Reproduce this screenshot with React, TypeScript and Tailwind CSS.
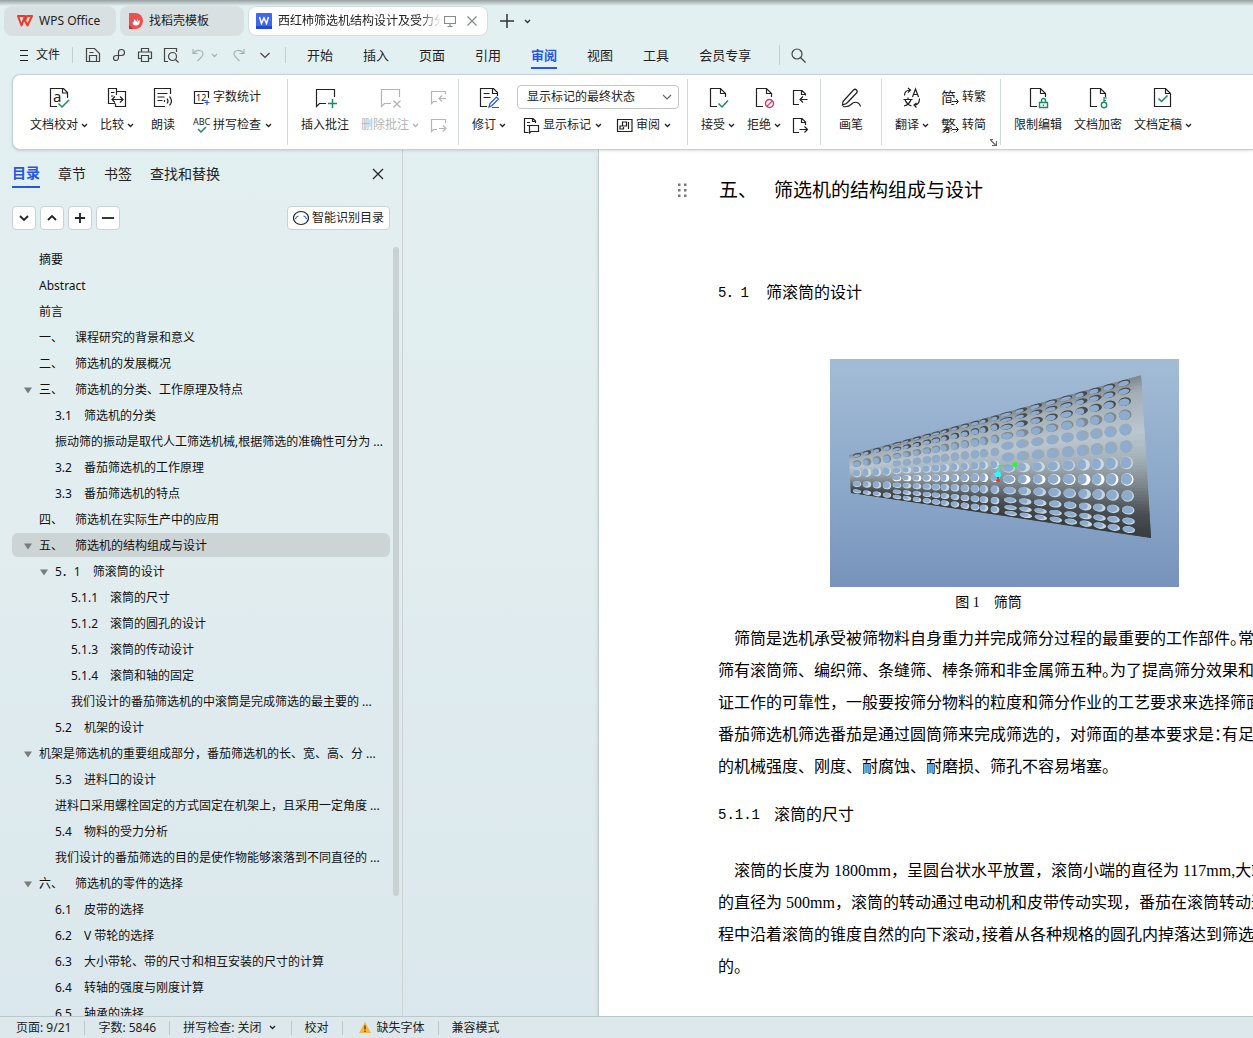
import { useState, type ReactNode } from "react";

type IconProps = { children: ReactNode; w?: number; className?: string };

function Icon({ children, w = 24, className = "" }: IconProps) {
  return (
    <svg
      width={w}
      height={w}
      viewBox={`0 0 ${w} ${w}`}
      fill="none"
      stroke="currentColor"
      strokeWidth="1.2"
      className={`shrink-0 ${className}`}
      aria-hidden="true"
    >
      {children}
    </svg>
  );
}

function Chevron({ className = "" }: { className?: string }) {
  return (
    <svg width="7" height="5" viewBox="0 0 7 5" fill="none" stroke="currentColor" strokeWidth="1.3" className={`shrink-0 ${className}`} aria-hidden="true">
      <path d="M1 1l2.5 2.5L6 1" />
    </svg>
  );
}

const GREEN = "#1a8a63";
const BLUE = "#2456e6";
const RED = "#d43a5e";

const proofIcon = (
  <Icon>
    <path d="M20.500 13V7.500l-4-4H3.500v18H10M15.500 3.500v4.500h5" />
    <text x="6" y="17" fontSize="15" stroke="none" fill="currentColor" fontFamily="Noto Sans">a</text>
    <path d="M11.500 18.500l3.500 3.500 7-7" stroke={GREEN} strokeWidth="1.500" />
  </Icon>
);
const compareIcon = (
  <Icon>
    <path d="M11.500 10V3.500h-8v15h6.500M11.500 6.500h9v15h-10v-3M6 7.500h3.500M6 11h2.500" />
    <path d="M7 14.500h11M10 11.500l-3 3 3 3M15 11.500l3 3-3 3" />
  </Icon>
);
const readIcon = (
  <Icon>
    <path d="M19.500 9V3.500H3.500v18H14M6.500 8.500h10M6.500 12h7M6.500 15.500h5" />
    <path d="M13.500 15v2M16 13.500q2 2.500 0 5M18.500 11.500q4 4.500 0 9" />
  </Icon>
);
const countIcon = (
  <Icon w={17}>
    <path d="M15.500 9V2.500H1.500v12h9" />
    <text x="3" y="12" fontSize="9" stroke="none" fill="currentColor" fontFamily="Noto Sans">12</text>
    <path d="M14 11v5M11.500 13.500h5" stroke={BLUE} />
  </Icon>
);
const spellIcon = (
  <Icon w={17}>
    <text x="0" y="8" fontSize="9" stroke="none" fill="currentColor" fontFamily="Noto Sans">ABC</text>
    <path d="M5 12l3 3 5-5" stroke={GREEN} strokeWidth="1.500" />
  </Icon>
);
const insertNoteIcon = (
  <Icon>
    <path d="M21.500 12V4.500h-18v17l3-3H13" />
    <path d="M19.500 14v9M15 18.500h9" stroke={GREEN} strokeWidth="1.500" />
  </Icon>
);
const deleteNoteIcon = (
  <Icon>
    <path d="M21.500 12V4.500h-18v17l3-3H13M15.500 15.500l7 7M22.500 15.500l-7 7" />
  </Icon>
);
const prevNoteIcon = (
  <Icon w={18}>
    <path d="M16.500 6V3.500H2.500v12l2-2H8M17 10.500h-7M13 7.500l-3 3 3 3" />
  </Icon>
);
const nextNoteIcon = (
  <Icon w={18}>
    <path d="M16.500 7V3.500H2.500v12l2-2H8M10 12.500h7M14 9.500l3 3-3 3" />
  </Icon>
);
const reviseIcon = (
  <Icon>
    <path d="M20.500 11V7.500l-4-4h-13v18H10M15.500 4v4.500h5M6.500 8.500h6M6.500 12.500h7" />
    <path d="M12 22l1-3.500 6.500-6.500 2 2-6.500 6.500zM15 22.500h7" stroke={BLUE} />
  </Icon>
);
const markupIcon = (
  <Icon w={17}>
    <path d="M12.500 6V4L10 1.500H1.500v14h4M9.500 1.500v3h3M4 5.500h3M4 8.500h2M6.500 16V8.500h9v6H8z" />
  </Icon>
);
const paneIcon = (
  <Icon w={17}>
    <path d="M1.500 2.500h14.500v12H1.500zM12.500 5v7M6.500 5h4v4h-4zM6.500 9h-2.500v3h3.500v-2" />
  </Icon>
);
const docPath = "M19.500 12V8.500l-5-5H4.500v18H11M14.500 3.500v5h5";
const acceptIcon = (
  <Icon>
    <path d={docPath} />
    <path d="M12.500 18.500l3.500 3.500 6-6.500" stroke={GREEN} strokeWidth="1.500" />
  </Icon>
);
const rejectIcon = (
  <Icon>
    <path d={docPath} />
    <circle cx="17.500" cy="18.500" r="4" stroke={RED} strokeWidth="1.500" />
    <path d="M14.800 21.300l5.500-5.500" stroke={RED} />
  </Icon>
);
const prevDocIcon = (
  <Icon w={17}>
    <path d="M13.500 6.500V5L10 1.500H1.500v14H7M9.500 1.500V5.500h4M15.500 10.500H8M11 7.500l-3 3 3 3" />
  </Icon>
);
const nextDocIcon = (
  <Icon w={17}>
    <path d="M13.500 8V5L10 1.500H1.500v14H7M9.500 1.500V5.500h4M7.500 12.500h8M12.500 9.500l3 3-3 3" />
  </Icon>
);
const penIcon = (
  <Icon>
    <path d="M4 16.500L14.500 5q1.500-1.500 3 0t0 3L7.500 18.500l-4 1.500zM9 17l8.500-9" />
    <path d="M4 21.500q5 1 8-2t6-2 3.500 4" />
  </Icon>
);
const translateIcon = (
  <Icon>
    <path d="M4.500 10.500q0-5.500 6-5.500M8 3l2.500 2L8 7.500M19.500 13.500q0 6.500-5.500 6.500M16.500 18L14 20l2.500 2.500" />
    <path d="M12.500 12l3-8 3 8M13.500 9.500h4M3.500 14.500h9M8 12.500v2M5 14.500q1.500 5 6.500 6.500M11 14.500q-1.500 5-7 6.500" />
  </Icon>
);
const lockIcon = (
  <Icon>
    <path d={docPath} />
    <path d="M13.500 17.500h8v5h-8zM15.500 17.500v-2q0-2 2-2t2 2v2M17.500 19.500v1.500" stroke={GREEN} strokeWidth="1.400" />
  </Icon>
);
const keyIcon = (
  <Icon>
    <path d={docPath} />
    <circle cx="18" cy="20" r="2.700" stroke={GREEN} strokeWidth="1.400" />
    <path d="M18 17.500V12M18 13h3M18 15.500h2" stroke={GREEN} />
  </Icon>
);
const finalIcon = (
  <Icon>
    <path d="M19.500 8.500l-5-5H3.500v18h16zM14.500 3.500v5h5" />
    <path d="M7.500 13.500l3 3 6-6" stroke={GREEN} strokeWidth="1.500" />
  </Icon>
);

function BigButton({ icon, label, arrow, disabled }: { icon: ReactNode; label: string; arrow?: boolean; disabled?: boolean }) {
  return (
    <button disabled={disabled} className="flex shrink-0 flex-col items-center gap-1 disabled:text-[#b4b4b4]">
      {icon}
      <span className="flex h-6 items-center gap-[3px] whitespace-nowrap">
        {label}
        {arrow && <Chevron />}
      </span>
    </button>
  );
}

function SmallButton({ icon, label, arrow, title, disabled }: { icon: ReactNode; label?: string; arrow?: boolean; title?: string; disabled?: boolean }) {
  return (
    <button disabled={disabled} aria-label={title} className="flex h-6 shrink-0 items-center gap-[3px] whitespace-nowrap disabled:text-[#b4b4b4]">
      {icon}
      {label}
      {arrow && <Chevron className="ml-px" />}
    </button>
  );
}

function Divider() {
  return <div className="h-[66px] w-px shrink-0 self-center bg-[#d3d8d8]" />;
}

function CjkGlyph({ char }: { char: string }) {
  return (
    <span className="relative flex w-[18px] text-[15px]">
      {char}
      <svg width="7" height="6" viewBox="0 0 7 6" fill="none" stroke="currentColor" className="absolute right-0 bottom-[3px] bg-white" aria-hidden="true">
        <path d="M0 3.500h6M4 1l2.500 2.500L4 6" />
      </svg>
    </span>
  );
}

function TitleBar() {
  return (
    <header className="flex gap-1 pt-1.5 pl-1 text-xs">
      <button className="flex h-[30px] w-28 items-center gap-[6px] rounded-lg bg-[#d8e0e2] pl-[13px]">
        <svg width="16" height="12" viewBox="0 0 16 12" fill="none" stroke="#ee3b2c" strokeWidth="2" strokeLinejoin="round" aria-hidden="true">
          <path d="M1 1h7L4.500 10.500zM7 4l3.500 6.500L15 1h-5L7.500 7" />
        </svg>
        WPS Office
      </button>
      <button className="flex h-[30px] w-[124px] items-center gap-[5px] rounded-lg bg-[#d8e0e2] pl-2">
        <svg width="16" height="16" viewBox="0 0 16 16" aria-hidden="true">
          <path d="M1 0h6.500a7.500 8 0 0 1 0 16H1z" fill="#ee4f50" />
          <path d="M1 12v4h4z" fill="#b92f35" />
          <path d="M8.500 3q2 2.500-.5 6 0-2-2-3 0 4-1.500 3.500Q5 13 8.500 12.500 12 12 12 7q-1.500 0-3 3 1.500-4-.5-7z" fill="#fff" />
        </svg>
        找稻壳模板
      </button>
      <div className="flex h-[30px] w-60 items-center rounded-lg border border-[#d5dddd] bg-white pl-[7px]">
        <svg width="16" height="16" viewBox="0 0 16 16" className="shrink-0" aria-hidden="true">
          <rect width="16" height="16" rx="1" fill="#3f68f0" />
          <path d="M0 13h16v3H0z" fill="#2348cf" />
          <path d="M3.500 4l2 6.500L8 5l2.500 5.500 2-6.500" fill="none" stroke="#fff" strokeWidth="1.500" />
        </svg>
        <span className="ml-1.5 w-[164px] overflow-hidden whitespace-nowrap [mask-image:linear-gradient(to_right,#000_86%,transparent)]">
          西红柿筛选机结构设计及受力分
        </span>
        <Icon w={12} className="ml-[2px] text-[#858a8a]">
          <path d="M.5 1.500h11v7H.5zM6 8.500v3M3.500 11.500h5" />
        </Icon>
        <button aria-label="关闭标签" className="ml-2.5 text-[#858a8a]">
          <Icon w={12}>
            <path d="M1.500 1.500l9 9M10.500 1.500l-9 9" />
          </Icon>
        </button>
      </div>
      <button aria-label="新建标签" className="ml-2 text-[#333]">
        <Icon w={14}>
          <path d="M7 0v14M0 7h14" strokeWidth="1.500" />
        </Icon>
      </button>
      <button aria-label="标签列表" className="ml-1.5 text-[#333]">
        <Chevron />
      </button>
    </header>
  );
}

const menuTabs = ["开始", "插入", "页面", "引用", "审阅", "视图", "工具", "会员专享"];

function MenuBar() {
  const [active, setActive] = useState("审阅");
  return (
    <nav className="flex h-[38px] shrink-0 items-center">
      <button className="ml-5 flex items-center gap-2 text-xs">
        <Icon w={8} className="overflow-visible">
          <path d="M0 -.5h8M0 4.500h8M0 9.500h8" strokeWidth="1" />
        </Icon>
        文件
      </button>
      <div className="ml-3 h-4 w-px bg-[#c6cfd0]" />
      <div className="ml-3 flex items-center gap-2.5 text-[#444]">
        <button aria-label="保存">
          <Icon w={16}>
            <path d="M1.500 1.500h8l5 5v8h-13zM4.500 14V8.500h7V14M4.500 5.500h4" />
          </Icon>
        </button>
        <button aria-label="输出">
          <Icon w={16}>
            <path d="M7.500 10V5q0-2.500 3-2.500T13.500 5.500t-3 3H5.500Q2.500 8.500 2.500 11T5 13.500 7.500 10" />
          </Icon>
        </button>
        <button aria-label="打印">
          <Icon w={16}>
            <path d="M4.500 5V1.500h7V5M4.500 11.500h-3V5h13v6.500h-3M4.500 8.500h7v6h-7z" />
          </Icon>
        </button>
        <button aria-label="打印预览">
          <Icon w={16}>
            <path d="M5 14.500H1.500v-13h12V5M12.500 12.500l3 3" />
            <circle cx="9.500" cy="9.500" r="4" />
          </Icon>
        </button>
        <button aria-label="撤销" className="ml-0.5 flex items-center gap-1.5 text-[#a9b2b3]">
          <Icon w={14}>
            <path d="M2 1v4.500h4.500M2 5.500Q5 2 8.500 2.500T12 6q0 2-5.500 7" />
          </Icon>
          <Chevron />
        </button>
        <button aria-label="恢复" className="ml-1 text-[#a9b2b3]">
          <Icon w={14}>
            <path d="M12 1v4.500H7.500M12 5.500Q9 2 5.500 2.500T2 6q0 2 5.500 7" />
          </Icon>
        </button>
        <button aria-label="更多" className="ml-[3px]">
          <Icon w={12}>
            <path d="M1.500 4L6 8.500 10.500 4" />
          </Icon>
        </button>
      </div>
      <div className="ml-3.5 h-4 w-px bg-[#c6cfd0]" />
      <div className="ml-[21px] flex gap-[30px] text-[13px]">
        {menuTabs.map((tab) => (
          <button
            key={tab}
            onClick={() => setActive(tab)}
            className={`flex h-7 items-center border-b-2 pt-1 whitespace-nowrap ${active === tab ? "border-[#2456e6] font-bold text-[#2456e6]" : "border-transparent"}`}
          >
            {tab}
          </button>
        ))}
      </div>
      <div className="ml-7 h-5 w-px bg-[#c6cfd0]" />
      <button aria-label="搜索" className="ml-2.5 text-[#444]">
        <Icon w={17}>
          <circle cx="7" cy="7" r="5" />
          <path d="M10.500 10.500l5 5" />
        </Icon>
      </button>
    </nav>
  );
}

function Ribbon() {
  return (
    <div className="relative z-10 ml-3 flex h-[76px] shrink-0 overflow-hidden rounded-l-lg border border-r-0 border-[#c5d1d2] bg-white text-xs shadow-sm">
      <div className="flex w-[274px] shrink-0 pt-[10px] pl-[17px]">
        <BigButton icon={proofIcon} label="文档校对" arrow />
        <div className="ml-3">
          <BigButton icon={compareIcon} label="比较" arrow />
        </div>
        <div className="ml-[17px]">
          <BigButton icon={readIcon} label="朗读" />
        </div>
        <div className="ml-[18px] flex flex-col gap-1">
          <SmallButton icon={countIcon} label="字数统计" />
          <SmallButton icon={spellIcon} label="拼写检查" arrow />
        </div>
      </div>
      <Divider />
      <div className="flex w-[170px] shrink-0 pt-[10px] pl-[13px]">
        <BigButton icon={insertNoteIcon} label="插入批注" />
        <div className="ml-3">
          <BigButton icon={deleteNoteIcon} label="删除批注" arrow disabled />
        </div>
        <div className="ml-[10px] flex flex-col gap-1">
          <SmallButton icon={prevNoteIcon} title="上一条批注" disabled />
          <SmallButton icon={nextNoteIcon} title="下一条批注" disabled />
        </div>
      </div>
      <Divider />
      <div className="flex w-[228px] shrink-0 pt-[10px] pl-[13px]">
        <BigButton icon={reviseIcon} label="修订" arrow />
        <div className="ml-[11px] flex flex-col gap-1">
          <div className="relative">
            <select aria-label="标记显示方式" className="block h-6 w-[162px] appearance-none rounded border border-[#c3c7c7] bg-white pl-[9px]">
              <option>显示标记的最终状态</option>
              <option>最终状态</option>
              <option>显示标记的原始状态</option>
              <option>原始状态</option>
            </select>
            <Icon w={10} className="pointer-events-none absolute top-[7px] right-[7px] text-[#666]">
              <path d="M1 3l4 4 4-4" />
            </Icon>
          </div>
          <div className="flex gap-[14px] pl-1.5">
            <SmallButton icon={markupIcon} label="显示标记" arrow />
            <SmallButton icon={paneIcon} label="审阅" arrow />
          </div>
        </div>
      </div>
      <Divider />
      <div className="flex w-[132px] shrink-0 pt-[10px] pl-[13px]">
        <BigButton icon={acceptIcon} label="接受" arrow />
        <div className="ml-3">
          <BigButton icon={rejectIcon} label="拒绝" arrow />
        </div>
        <div className="ml-[11px] flex flex-col gap-1">
          <SmallButton icon={prevDocIcon} title="上一条修订" />
          <SmallButton icon={nextDocIcon} title="下一条修订" />
        </div>
      </div>
      <Divider />
      <div className="flex w-[60px] shrink-0 justify-center pt-[10px]">
        <BigButton icon={penIcon} label="画笔" />
      </div>
      <Divider />
      <div className="relative flex w-[118px] shrink-0 pt-[10px] pl-[13px]">
        <BigButton icon={translateIcon} label="翻译" arrow />
        <div className="ml-3 flex flex-col gap-1">
          <SmallButton icon={<CjkGlyph char="简" />} label="转繁" />
          <SmallButton icon={<CjkGlyph char="繁" />} label="转简" />
        </div>
        <button aria-label="更多翻译设置" className="absolute right-[3px] bottom-[3px] text-[#666]">
          <Icon w={7}>
            <path d="M0 .500h3M.5 1l5 5M6.500 2v4.500H2" />
          </Icon>
        </button>
      </div>
      <Divider />
      <div className="flex gap-3 pt-[10px] pl-[13px]">
        <BigButton icon={lockIcon} label="限制编辑" />
        <BigButton icon={keyIcon} label="文档加密" />
        <BigButton icon={finalIcon} label="文档定稿" arrow />
      </div>
    </div>
  );
}

type TocItem = { text: string; level: 1 | 2 | 3; open?: boolean; active?: boolean };

const toc: TocItem[] = [
  { text: "摘要", level: 1 },
  { text: "Abstract", level: 1 },
  { text: "前言", level: 1 },
  { text: "一、　课程研究的背景和意义", level: 1 },
  { text: "二、　筛选机的发展概况", level: 1 },
  { text: "三、　筛选机的分类、工作原理及特点", level: 1, open: true },
  { text: "3.1　筛选机的分类", level: 2 },
  { text: "振动筛的振动是取代人工筛选机械,根据筛选的准确性可分为 ...", level: 2 },
  { text: "3.2　番茄筛选机的工作原理", level: 2 },
  { text: "3.3　番茄筛选机的特点", level: 2 },
  { text: "四、　筛选机在实际生产中的应用", level: 1 },
  { text: "五、　筛选机的结构组成与设计", level: 1, open: true, active: true },
  { text: "5．1　筛滚筒的设计", level: 2, open: true },
  { text: "5.1.1　滚筒的尺寸", level: 3 },
  { text: "5.1.2　滚筒的圆孔的设计", level: 3 },
  { text: "5.1.3　滚筒的传动设计", level: 3 },
  { text: "5.1.4　滚筒和轴的固定", level: 3 },
  { text: "我们设计的番茄筛选机的中滚筒是完成筛选的最主要的 ...", level: 3 },
  { text: "5.2　机架的设计", level: 2 },
  { text: "机架是筛选机的重要组成部分，番茄筛选机的长、宽、高、分 ...", level: 1, open: true },
  { text: "5.3　进料口的设计", level: 2 },
  { text: "进料口采用螺栓固定的方式固定在机架上，且采用一定角度 ...", level: 2 },
  { text: "5.4　物料的受力分析", level: 2 },
  { text: "我们设计的番茄筛选的目的是使作物能够滚落到不同直径的 ...", level: 2 },
  { text: "六、　筛选机的零件的选择", level: 1, open: true },
  { text: "6.1　皮带的选择", level: 2 },
  { text: "6.2　V 带轮的选择", level: 2 },
  { text: "6.3　大小带轮、带的尺寸和相互安装的尺寸的计算", level: 2 },
  { text: "6.4　转轴的强度与刚度计算", level: 2 },
  { text: "6.5　轴承的选择", level: 2 },
];

const indent = { 1: "pl-[11px]", 2: "pl-[27px]", 3: "pl-[43px]" };

const toolButton = "flex size-6 items-center justify-center rounded border border-[#c9d3d4] bg-white text-[#222]";

function Sidebar() {
  return (
    <aside className="flex w-[403px] shrink-0 flex-col border-r border-[#cdd3d4]">
      <div className="flex items-start gap-[18px] pt-2.5 pr-[18px] pl-3 text-sm">
        <button className="flex h-7 items-center border-b-2 border-[#2456e6] font-bold text-[#2456e6]">目录</button>
        <button className="h-7">章节</button>
        <button className="h-7">书签</button>
        <button className="h-7">查找和替换</button>
        <button aria-label="关闭目录" className="ml-auto flex h-7 items-center">
          <Icon w={12}>
            <path d="M1 1l10 10M11 1L1 11" />
          </Icon>
        </button>
      </div>
      <div className="mt-[18px] flex gap-1 pr-3 pl-3 text-xs">
        <button aria-label="展开" className={toolButton}>
          <Icon w={10}>
            <path d="M1 3l4 4 4-4" strokeWidth="1.800" />
          </Icon>
        </button>
        <button aria-label="收起" className={toolButton}>
          <Icon w={10}>
            <path d="M1 7l4-4 4 4" strokeWidth="1.800" />
          </Icon>
        </button>
        <button aria-label="升级" className={toolButton}>
          <Icon w={10}>
            <path d="M5 0v10M0 5h10" strokeWidth="1.800" />
          </Icon>
        </button>
        <button aria-label="降级" className={toolButton}>
          <Icon w={12}>
            <path d="M0 6h12" strokeWidth="1.800" />
          </Icon>
        </button>
        <button className="ml-auto flex h-6 items-center gap-[3px] rounded border border-[#c9d3d4] bg-white px-[5px]">
          <Icon w={16}>
            <ellipse cx="8" cy="8" rx="7.500" ry="6.500" />
            <path d="M2.500 9q.5-2.500 3-3M13.500 9q-.5-2.500-3-3" stroke={BLUE} />
          </Icon>
          智能识别目录
        </button>
      </div>
      <div className="mt-[17px] flex min-h-0 flex-1 overflow-hidden pl-3 text-xs">
        <ul className="flex min-w-0 flex-1 flex-col gap-[2px] text-[#111]">
          {toc.map((item) => (
            <li key={item.text} className="shrink-0">
              <a
                href="#"
                className={`flex h-6 items-center rounded-md pt-0.5 whitespace-nowrap [text-spacing-trim:space-all] ${indent[item.level]} ${item.active ? "bg-[#ccd4d6]" : ""}`}
              >
                <span className="w-4 shrink-0">
                  {item.open && (
                    <svg width="10" height="7" viewBox="0 0 10 7" aria-hidden="true">
                      <path d="M1 .5h8L5 6.500z" fill="#777d7d" />
                    </svg>
                  )}
                </span>
                {item.text}
              </a>
            </li>
          ))}
        </ul>
        <div className="mr-[3px] ml-[3px] h-[649px] w-1.5 shrink-0 rounded-full bg-[#c8d1d3]" />
      </div>
    </aside>
  );
}

// Conical drum. Every point is given by an x and by a share of the height at that x.
const topAt = (x: number) => 96 - (x - 19) * 0.274;
const bottomAt = (x: number) => 134 + (x - 21) * 0.15;
const at = (x: number, f: number) => topAt(x) + (bottomAt(x) - topAt(x)) * f;

const shades: [number, number[]][] = [
  [0, [125, 135, 141]],
  [0.1, [163, 174, 181]],
  [0.35, [186, 199, 208]],
  [0.5, [168, 180, 188]],
  [0.68, [125, 135, 141]],
  [0.86, [72, 78, 82]],
  [1, [56, 61, 64]],
];

function shadeAt(f: number) {
  const i = Math.max(1, shades.findIndex(([stop]) => stop >= f));
  const [a, from] = shades[i - 1];
  const [b, to] = shades[i];
  const t = (f - a) / (b - a);
  return `rgb(${from.map((c, k) => Math.round(c + (to[k] - c) * t)).join(",")})`;
}

const slices = Array.from({ length: 50 }, (_, i) => {
  const f = i / 50;
  const g = f + 0.04;
  return {
    color: shadeAt(f + 0.01),
    points: `18,${at(18, f)} 323,${at(323, f)} 323,${at(323, g)} 18,${at(18, g)}`,
  };
});

const sections = [
  { cols: [27, 37, 47, 57], rx: 4.2, rows: [0.06, 0.26, 0.5, 0.76, 0.94] },
  { cols: [67, 77, 87, 97, 106, 115, 125, 135, 145, 154, 165], rx: 4.3, rows: [0.03, 0.12, 0.24, 0.37, 0.5, 0.63, 0.75, 0.86, 0.95] },
  { cols: [178, 193, 208, 223, 238, 253, 267, 281, 296], rx: 6.3, rows: [0.025, 0.077, 0.145, 0.23, 0.325, 0.434, 0.54, 0.647, 0.753, 0.845, 0.915, 0.97] },
];

function innerColor(f: number) {
  if (f < 0.2) return "#454c50";
  if (f < 0.3) return "#7d878d";
  if (f < 0.48) return "#9ba9b2";
  if (f < 0.58) return "#c9dae4";
  if (f < 0.7) return "#ffffff";
  return "#c5d6e1";
}

const holes = sections.flatMap(({ cols, rx, rows }, s) =>
  cols.flatMap((x, c) =>
    rows.map((f, r) => {
      // room between this row and its neighbours keeps the holes apart
      const gap = Math.min(f - (rows[r - 1] ?? -f), (rows[r + 1] ?? 2 - f) - f);
      const room = (bottomAt(x) - topAt(x)) * gap * 0.4;
      return {
        x: x + (s === 2 ? f * 5 - 2 : 0),
        y: at(x, f),
        rx,
        ry: Math.max(0.9, Math.min(room, rx)),
        tilt: -16 + f * 26,
        shift: (1 + ((c * 7) % 4) * 0.6) * (s === 2 ? 1 : 0.7),
        up: f < 0.5 ? 0.8 : -0.6,
        inner: innerColor(f),
      };
    })
  )
);

function DrumFigure() {
  return (
    <svg width="349" height="228" viewBox="0 0 349 228" role="img" aria-label="筛筒">
      <defs>
        <linearGradient id="sky" x1="0" y1="0" x2="0" y2="1">
          <stop offset="0" stopColor="#a3bcd6" />
          <stop offset="0.5" stopColor="#8eaacb" />
          <stop offset="1" stopColor="#7793bb" />
        </linearGradient>
        <clipPath id="drum">
          <path d="M19 96L311 16l10 163L21 134z" />
        </clipPath>
      </defs>
      <rect width="349" height="228" fill="url(#sky)" />
      <g clipPath="url(#drum)">
        {slices.map((s) => (
          <polygon key={s.points} points={s.points} fill={s.color} />
        ))}
        {holes.map((h, i) => (
          <g key={i} transform={`translate(${h.x} ${h.y}) rotate(${h.tilt})`}>
            <ellipse rx={h.rx} ry={h.ry} fill={h.inner} />
            <ellipse cx={-h.shift * 0.7} cy={h.up * 0.6} rx={h.rx - h.shift * 0.7} ry={Math.max(0.5, h.ry - 0.6)} fill="#8fabcd" />
          </g>
        ))}
      </g>
      <path d="M168 107l18-1" stroke="#2bf52b" />
      <circle cx="185" cy="105.500" r="2.500" fill="#2bf52b" />
      <path d="M168 107v9" stroke="#2ff" />
      <circle cx="168" cy="115.500" r="3" fill="#2ff" />
      <path d="M168 118v5M166 121.500h4" stroke="#f03030" strokeWidth="2" />
    </svg>
  );
}

// Punctuation set on half a cell
function Half({ children }: { children: string }) {
  return <span className="[font-feature-settings:'halt']">{children}</span>;
}

function DocumentPage() {
  return (
    <article className="min-w-0 flex-1 overflow-hidden border-l border-[#c0c9cc] bg-white pl-[79px] whitespace-nowrap text-black shadow-md">
      <div className="mt-6 flex h-8 items-center text-[19px]">
        <svg width="9" height="15" viewBox="0 0 9 15" fill="#777" className="mr-8" aria-hidden="true">
          <path d="M0 .5h2.500v2.500H0zM6 .5h2.500v2.500H6zM0 6h2.500v2.500H0zM6 6h2.500v2.500H6zM0 11.500h2.500v2.500H0zM6 11.500h2.500v2.500H6z" />
        </svg>
        <h1 className="flex">
          <span className="w-[55px]">五、</span>筛选机的结构组成与设计
        </h1>
      </div>
      <div className="pl-10 font-['Liberation_Serif','Noto_Sans_CJK_SC',serif] text-base leading-8 [text-spacing-trim:space-all]">
        <h2 className="mt-[71px] flex">
          <span className="w-12 font-['Liberation_Mono','Noto_Sans_CJK_SC',monospace] text-sm leading-8">5．1</span>筛滚筒的设计
        </h2>
        <figure className="mt-[50px] ml-28 w-[349px]">
          <DrumFigure />
          <figcaption className="pr-8 text-center text-sm leading-8">图 1　筛筒</figcaption>
        </figure>
        <p className="mt-1">
          <span className="pl-4">
            筛筒是选机承受被筛物料自身重力并完成筛分过程的最重要的工作部件<Half>。</Half>常用的
          </span>
          <br />
          筛有滚筒筛、编织筛、条缝筛、棒条筛和非金属筛五种<Half>。</Half>为了提高筛分效果和保
          <br />
          证工作的可靠性，一般要按筛分物料的粒度和筛分作业的工艺要求来选择筛面。
          <br />
          番茄筛选机筛选番茄是通过圆筒筛来完成筛选的，对筛面的基本要求是<Half>：</Half>有足够
          <br />
          的机械强度、刚度、耐腐蚀、耐磨损、筛孔不容易堵塞。
        </p>
        <h3 className="mt-4 flex">
          <span className="w-14 font-['Liberation_Mono','Noto_Sans_CJK_SC',monospace] text-sm leading-8">5.1.1</span>滚筒的尺寸
        </h3>
        <p className="mt-6">
          <span className="pl-4">滚筒的长度为 1800mm，呈圆台状水平放置，滚筒小端的直径为 117mm,大端</span>
          <br />
          的直径为 500mm，滚筒的转动通过电动机和皮带传动实现，番茄在滚筒转动过
          <br />
          程中沿着滚筒的锥度自然的向下滚动<Half>，</Half>接着从各种规格的圆孔内掉落达到筛选目
          <br />
          的。
        </p>
      </div>
    </article>
  );
}

function StatusBar() {
  const line = <div className="h-3.5 w-px bg-[#bcc8cb]" />;
  return (
    <footer className="flex h-[22px] shrink-0 items-center gap-[13px] border-t border-[#bac8cb] bg-[#dce8ec] pl-4 text-xs">
      <span>页面: 9/21</span>
      {line}
      <span>字数: 5846</span>
      {line}
      <button className="flex items-center gap-[7px]">
        拼写检查: 关闭
        <Chevron />
      </button>
      <span className="ml-0.5">{line}</span>
      <button>校对</button>
      {line}
      <button className="ml-[3px] flex items-center gap-[6px]">
        <svg width="12" height="11" viewBox="0 0 12 11" aria-hidden="true">
          <path d="M6 0l6 11H0z" fill="#f7b53c" />
          <path d="M6 3.500v4M6 8.500V10" stroke="#5b3a00" strokeWidth="1.300" />
        </svg>
        缺失字体
      </button>
      {line}
      <button>兼容模式</button>
    </footer>
  );
}

export default function App() {
  return (
    <div className="relative flex h-screen flex-col overflow-hidden bg-linear-to-b from-[#e3f0f1] via-[#e1edef] to-[#dae7ec] font-['Noto_Sans','Noto_Sans_CJK_SC',sans-serif] text-[#222]">
      <div className="absolute inset-x-0 top-0 h-1.5 bg-linear-to-b from-[#96a0a1] to-transparent" />
      <TitleBar />
      <MenuBar />
      <Ribbon />
      <main className="flex min-h-0 flex-1">
        <Sidebar />
        <div className="w-[195px] shrink-0" />
        <DocumentPage />
      </main>
      <StatusBar />
    </div>
  );
}
